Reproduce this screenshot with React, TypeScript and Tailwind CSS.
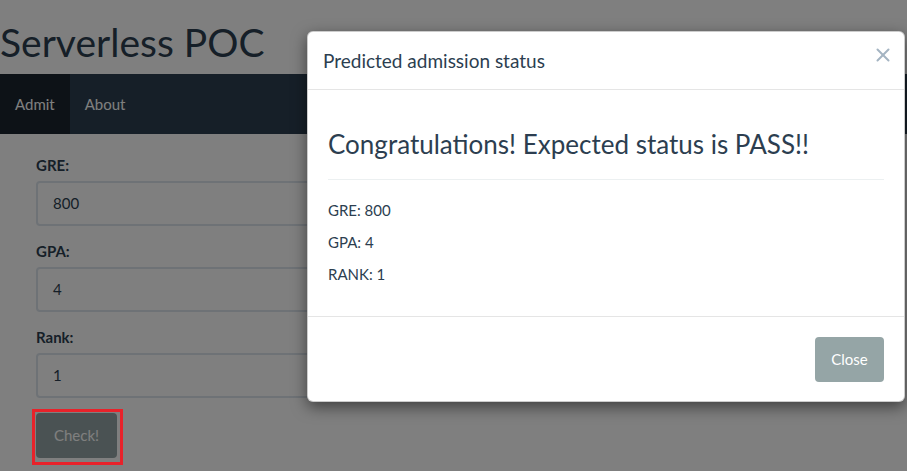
import { X } from 'lucide-react'

const fields = [
  { label: 'GRE:', value: '800' },
  { label: 'GPA:', value: '4' },
  { label: 'Rank:', value: '1' },
]

export default function App() {
  return (
    <div className="relative h-[471px] w-[907px] overflow-hidden bg-white font-['Lato','Noto_Sans',sans-serif] text-[15px] text-[#2c3e50]">
      {/* page under the modal */}
      <h1 className="mt-[21px] mb-[10px] h-[43px] text-[39px] leading-[43px] font-normal">Serverless POC</h1>
      <nav className="flex h-[60px] bg-[#2c3e50]">
        <a className="flex items-center bg-[#1a242f] px-[15px] text-white">Admit</a>
        <a className="flex items-center px-[15px] text-white">About</a>
      </nav>
      <form className="flex flex-col pt-[21px] pl-[36px] pr-[36px]">
        {fields.map((f) => (
          <div key={f.label} className="mb-[15px] flex flex-col">
            <label className="mb-[5px] font-bold leading-[21px]">{f.label}</label>
            <div className="flex h-[45px] items-center rounded-[4px] border-2 border-[#dce4ec] px-[15px]">{f.value}</div>
          </div>
        ))}
        <div className="flex">
          <button type="button" className="h-[45px] w-[81px] rounded-[4px] bg-[#95a5a6] text-white">Check!</button>
        </div>
      </form>

      {/* backdrop */}
      <div className="absolute inset-0 bg-black/50" />

      {/* annotation */}
      <div className="absolute top-[409px] left-[32px] h-[56px] w-[91px] border-[3px] border-[#e8222a]" />

      {/* modal */}
      <div className="absolute top-[31px] left-[307px] flex w-[598px] flex-col rounded-[6px] border border-black/20 bg-white shadow-[0_5px_15px_rgba(0,0,0,0.5)]">
        <div className="relative border-b border-[#e5e5e5] p-[15px]">
          <h4 className="text-[19px] leading-[27px]">Predicted admission status</h4>
          <X className="absolute top-[12px] right-[10px] text-[#a4b4c2]" size={22} strokeWidth={2.2} />
        </div>
        <div className="px-[20px] pt-[40px] pb-[20px]">
          <h3 className="mb-[20px] text-[26px] leading-[29px]">Congratulations! Expected status is PASS!!</h3>
          <hr className="mb-[20px] border-t border-[#ecf0f1]" />
          <p className="mb-[10.5px] leading-[21.5px]">GRE: 800</p>
          <p className="mb-[10.5px] leading-[21.5px]">GPA: 4</p>
          <p className="mb-[10.5px] leading-[21.5px]">RANK: 1</p>
        </div>
        <div className="flex justify-end border-t border-[#e5e5e5] px-[20px] pt-[20px] pb-[19px]">
          <button type="button" className="h-[45px] w-[69px] rounded-[4px] bg-[#95a5a6] text-white">Close</button>
        </div>
      </div>
    </div>
  )
}
